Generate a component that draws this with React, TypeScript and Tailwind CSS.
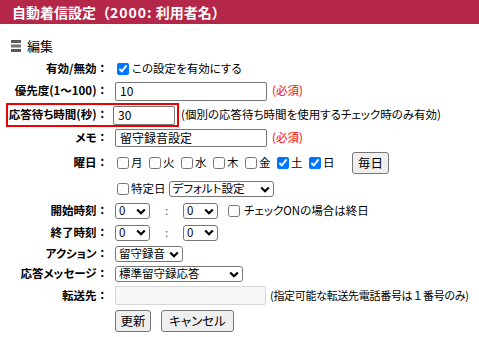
import type { ReactNode } from "react";

const font = "font-['Meiryo','Noto_Sans_CJK_JP',sans-serif]";

function Chevron() {
    return (
        <svg width="10" height="7" viewBox="0 0 10 7" aria-hidden="true">
            <path d="M1.2 1.5L5 5.2L8.8 1.5" fill="none" stroke="#000" strokeWidth="2.2" />
        </svg>
    );
}

function Sel({ text, className }: { text: string; className: string }) {
    return (
        <div className={`flex h-[16px] items-center justify-between rounded-[3px] border border-[#767676] bg-white pl-[3px] pr-[3px] ${className}`}>
            <span className="whitespace-nowrap leading-none">{text}</span>
            <Chevron />
        </div>
    );
}

function Check({ checked = false }: { checked?: boolean }) {
    return <input type="checkbox" defaultChecked={checked} className="m-0 h-[12px] w-[12px] shrink-0 accent-[#0075ff]" />;
}

function Btn({ children, className = "" }: { children: ReactNode; className?: string }) {
    return (
        <button type="button" className={`flex h-[22px] items-center justify-center whitespace-nowrap rounded-[3px] border border-[#767676] bg-[#efefef] px-0 text-[12.5px] ${className}`}>
            {children}
        </button>
    );
}

// 全角コロンはpaltを効かせない
function Label({ text, className = "" }: { text: string; className?: string }) {
    return (
        <div className={`shrink-0 whitespace-nowrap text-right font-bold ${className}`}>
            {text}
            {text && <span className="[font-feature-settings:normal]">：</span>}
        </div>
    );
}

function Row({ label, h, children }: { label: string; h: string; children?: ReactNode }) {
    return (
        <div className={`flex items-center ${h}`}>
            <Label text={label} className="w-[108px]" />
            <div className="ml-[7px] flex items-center whitespace-nowrap">{children}</div>
        </div>
    );
}

const days = [
    { d: "月", c: false },
    { d: "火", c: false },
    { d: "水", c: false },
    { d: "木", c: false },
    { d: "金", c: false },
    { d: "土", c: true },
    { d: "日", c: true },
];

export default function App() {
    return (
        <div className={`h-[337px] w-[479px] overflow-hidden bg-white text-black ${font}`}>
            <div className="flex h-[24px] items-center whitespace-nowrap bg-[#b52748] pl-[12px] text-[14px] font-bold text-white">
                自動着信設定（<span className="tracking-[1px]">2000:</span>&nbsp;利用者名）
            </div>

            <div className="mt-[12px] flex h-[20px] items-center pl-[11px]">
                <svg width="10" height="12" viewBox="0 0 10 12" aria-hidden="true">
                    <rect x="0" y="0" width="10" height="3" fill="#5a5a5a" />
                    <rect x="0" y="4.5" width="10" height="3" fill="#707070" />
                    <rect x="0" y="9" width="10" height="3" fill="#5a5a5a" />
                </svg>
                <span className="ml-[6px] text-[13px]">編集</span>
            </div>

            <div className="mt-[3px] flex flex-col text-[11.5px] [font-feature-settings:'palt']">
                <Row label="有効/無効" h="h-[20px]">
                    <span className="ml-[2px] flex items-center">
                        <Check checked />
                        <span className="ml-[3px]">この設定を有効にする</span>
                    </span>
                </Row>

                <Row label="優先度(1～100)" h="h-[24px]">
                    <div className="flex h-[19px] w-[152px] items-center rounded-[2px] border border-[#767676] pl-[4px] text-[12px]">10</div>
                    <span className="ml-[5px] text-[#ff0000]">(必須)</span>
                </Row>

                <div className="flex h-[24px] items-center whitespace-nowrap">
                    <div className="ml-[6px] flex h-[24px] w-[173px] items-center border-2 border-[#ee0000]">
                        <Label text="応答待ち時間(秒)" className="w-[100px]" />
                        <div className="ml-[5px] flex h-[19px] w-[62px] items-center rounded-[2px] border border-[#767676] pl-[4px] text-[12px]">30</div>
                    </div>
                    <span className="ml-[2px]">(個別の応答待ち時間を使用するチェック時のみ有効)</span>
                </div>

                <Row label="メモ" h="h-[21px]">
                    <div className="flex h-[18px] w-[152px] items-center rounded-[2px] border border-[#767676] pl-[4px] text-[12px]">留守録音設定</div>
                    <span className="ml-[5px] text-[#ff0000]">(必須)</span>
                </Row>

                <Row label="曜日" h="h-[30px]">
                    <div className="ml-[2px] flex items-center">
                        {days.map((x) => (
                            <span key={x.d} className="flex w-[32px] items-center">
                                <Check checked={x.c} />
                                <span className="ml-[2px]">{x.d}</span>
                            </span>
                        ))}
                        <Btn className="ml-[11px] w-[37px]">毎日</Btn>
                    </div>
                </Row>

                <Row label="" h="h-[22px]">
                    <span className="ml-[2px] flex items-center">
                        <Check />
                        <span className="ml-[2px]">特定日</span>
                    </span>
                    <Sel text="デフォルト設定" className="ml-[3px] w-[105px]" />
                </Row>

                <Row label="開始時刻" h="h-[22px]">
                    <Sel text="0" className="w-[35px]" />
                    <span className="w-[33px] text-center text-[#666]">:</span>
                    <Sel text="0" className="w-[35px]" />
                    <span className="ml-[10px] flex items-center">
                        <Check />
                        <span className="ml-[4px]">チェックONの場合は終日</span>
                    </span>
                </Row>

                <Row label="終了時刻" h="h-[21px]">
                    <Sel text="0" className="w-[35px]" />
                    <span className="w-[33px] text-center text-[#666]">:</span>
                    <Sel text="0" className="w-[35px]" />
                </Row>

                <Row label="アクション" h="h-[22px]">
                    <Sel text="留守録音" className="w-[68px]" />
                </Row>

                <Row label="応答メッセージ" h="h-[18px]">
                    <Sel text="標準留守録応答" className="w-[128px]" />
                </Row>

                <Row label="転送先" h="h-[25px]">
                    <div className="h-[19px] w-[151px] rounded-[2px] border border-[#d6d6d6] bg-[#f7f7f7]" />
                    <span className="ml-[4px] text-[11px] tracking-[-0.3px]">
                        (指定可能な転送先電話番号は<span className="[font-feature-settings:normal]">１</span>番号のみ)
                    </span>
                </Row>

                <Row label="" h="h-[26px]">
                    <Btn className="w-[36px]">更新</Btn>
                    <Btn className="ml-[10px] w-[73px]">キャンセル</Btn>
                </Row>
            </div>
        </div>
    );
}
